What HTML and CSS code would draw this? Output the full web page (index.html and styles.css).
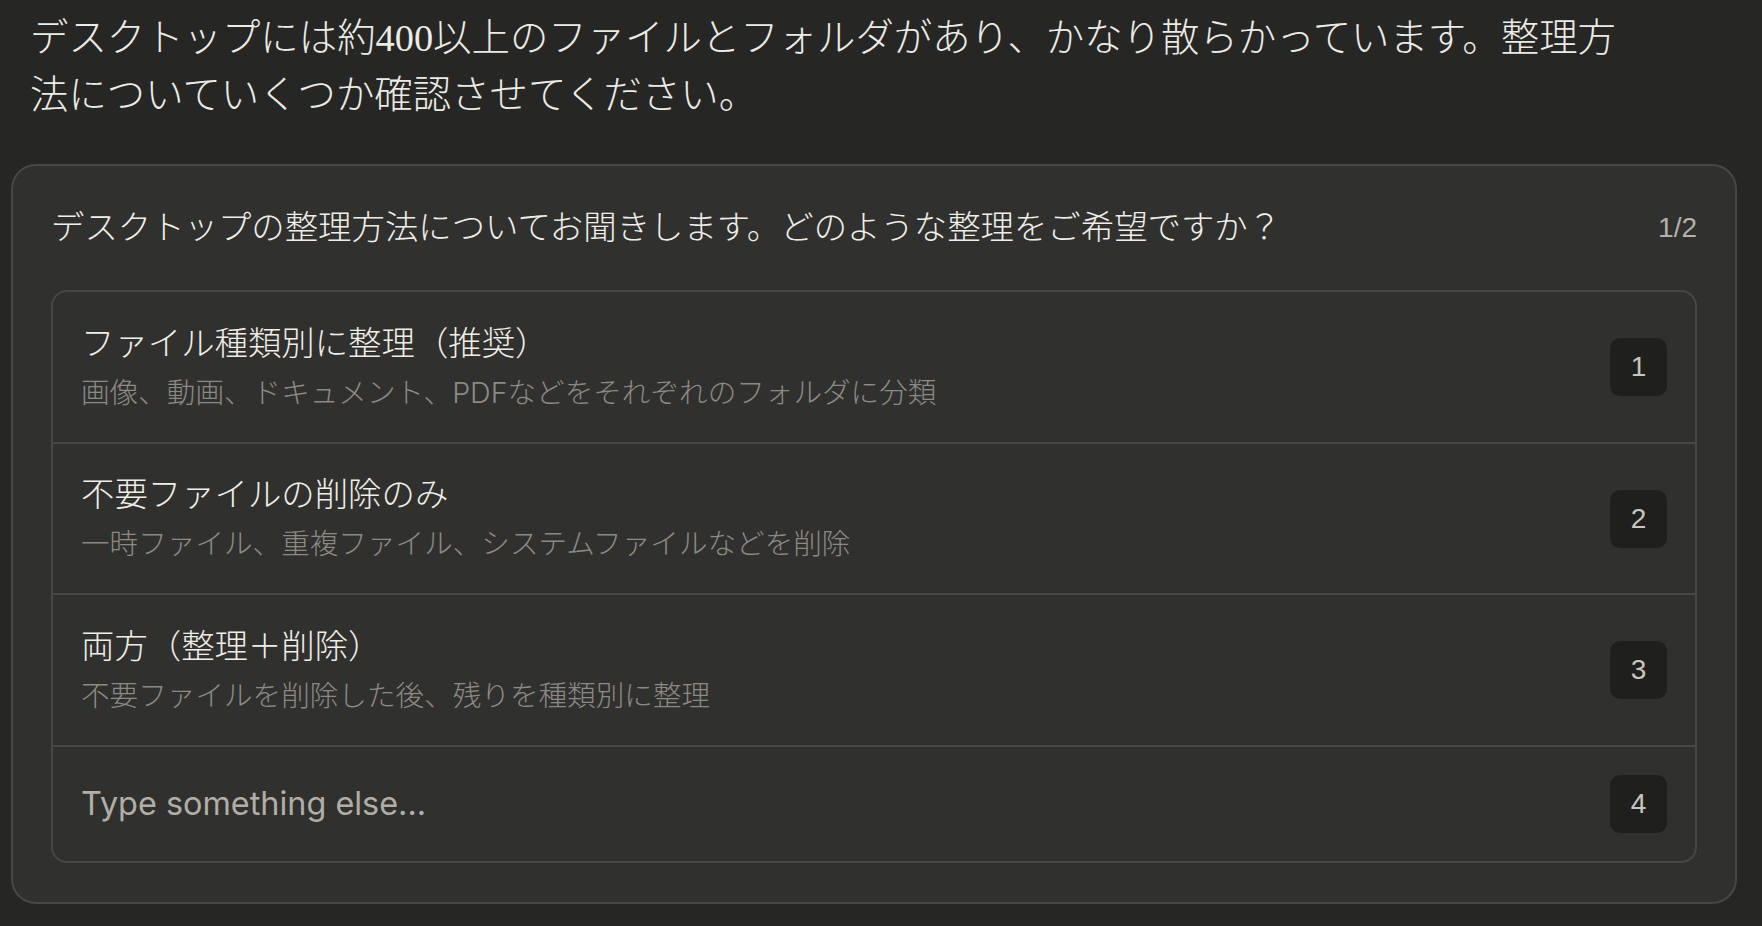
FILE: index.html
```html
<!DOCTYPE html>
<html lang="ja">
<head>
<meta charset="utf-8">
<title>Desktop cleanup</title>
<link rel="stylesheet" href="styles.css">
</head>
<body>
<main class="page">
  <p class="message">デスクトップには約400以上のファイルとフォルダがあり、かなり散らかっています。整理方法についていくつか確認させてください。</p>
  <section class="card">
    <header class="card-head">
      <h2 class="question">デスクトップの整理方法についてお聞きします。どのような整理をご希望ですか？</h2>
      <span class="step">1/2</span>
    </header>
    <ul class="options">
      <li class="option">
        <div class="option-text">
          <div class="option-title">ファイル種類別に整理（推奨）</div>
          <div class="option-desc">画像、動画、ドキュメント、PDFなどをそれぞれのフォルダに分類</div>
        </div>
        <span class="key">1</span>
      </li>
      <li class="option">
        <div class="option-text">
          <div class="option-title">不要ファイルの削除のみ</div>
          <div class="option-desc">一時ファイル、重複ファイル、システムファイルなどを削除</div>
        </div>
        <span class="key">2</span>
      </li>
      <li class="option">
        <div class="option-text">
          <div class="option-title">両方（整理＋削除）</div>
          <div class="option-desc">不要ファイルを削除した後、残りを種類別に整理</div>
        </div>
        <span class="key">3</span>
      </li>
      <li class="option option-other">
        <div class="option-text">
          <div class="placeholder">Type something else...</div>
        </div>
        <span class="key">4</span>
      </li>
    </ul>
  </section>
</main>
</body>
</html>
```

FILE: styles.css
```css
html, body {
  margin: 0;
  padding: 0;
  background: #262624;
}

.page {
  padding: 10px 25px 0 11px;
}

.message {
  margin: 0;
  padding-left: 19px;
  max-width: 1605px;
  font-family: "Liberation Serif", "Noto Sans CJK JP", serif;
  font-size: 38.4px;
  font-weight: 300;
  line-height: 57px;
  color: #ecebe6;
}

.card {
  margin-top: 40px;
  background: #30302e;
  border: 2px solid #474744;
  border-radius: 25px;
  padding: 36px 38px 39px 38px;
}

.card-head {
  display: flex;
  align-items: center;
  justify-content: space-between;
  margin-bottom: 38px;
}

.question {
  margin: 0;
  font-family: "Inter", "Noto Sans CJK JP", sans-serif;
  font-weight: 300;
  font-size: 33.4px;
  line-height: 50px;
  color: #efeee9;
}

.step {
  font-family: "Liberation Sans", "Noto Sans", sans-serif;
  font-size: 28px;
  color: #b3b1a9;
  padding-top: 2px;
}

.options {
  list-style: none;
  margin: 0;
  padding: 0;
  border: 2px solid #474744;
  border-radius: 16px;
}

.option {
  display: flex;
  align-items: center;
  justify-content: space-between;
  padding: 28.5px 28px 28px 28px;
  border-top: 2px solid #474744;
}

.option:first-child {
  border-top: none;
}

.option-text {
  display: flex;
  flex-direction: column;
  gap: 6px;
}

.option-title {
  font-family: "Inter", "Noto Sans CJK JP", sans-serif;
  font-weight: 300;
  font-size: 33.4px;
  line-height: 45px;
  color: #f0eee8;
}

.option-desc {
  font-family: "Inter", "Noto Sans CJK JP", sans-serif;
  font-weight: 300;
  font-size: 28.6px;
  line-height: 42px;
  color: #8b8a85;
}

.placeholder {
  font-family: "Inter", "Noto Sans CJK JP", sans-serif;
  font-size: 32.4px;
  line-height: 44px;
  color: #b0aea6;
}

.key {
  flex: none;
  display: flex;
  align-items: center;
  justify-content: center;
  width: 57px;
  height: 58px;
  border-radius: 10px;
  background: #1f1f1d;
  font-family: "Liberation Sans", "Noto Sans", sans-serif;
  font-size: 28px;
  color: #c8c6be;
}
```
